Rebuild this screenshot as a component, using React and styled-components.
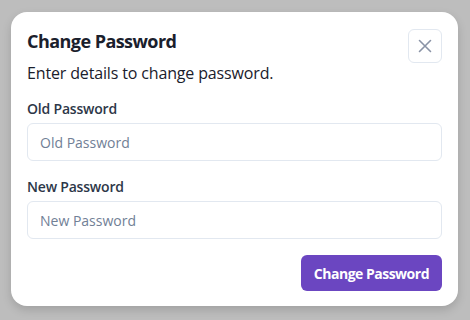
import React from "react";
import styled, { createGlobalStyle } from "styled-components";

const Global = createGlobalStyle`
  html, body { margin: 0; padding: 0; }
  body {
    background: #bdbdbd;
    font-family: "Open Sans", "Noto Sans", sans-serif;
    width: 470px;
    height: 320px;
    overflow: hidden;
  }
  * { box-sizing: border-box; }
`;

const Page = styled.div`
  padding: 12px 12px 0 11px;
`;

const Modal = styled.div`
  position: relative;
  background: #ffffff;
  border-radius: 16px;
  box-shadow: 0 4px 10px rgba(0, 0, 0, 0.15);
  width: 447px;
  padding: 16px 16px 15px 16px;
  display: flex;
  flex-direction: column;
`;

const Title = styled.h2`
  margin: 0;
  font-size: 18px;
  line-height: 27px;
  font-weight: 700;
  letter-spacing: -0.55px;
  color: #1a202c;
`;

const Description = styled.p`
  margin: 6px 0 0;
  font-size: 16px;
  line-height: 24px;
  letter-spacing: -0.15px;
  color: #1a202c;
`;

const CloseButton = styled.button`
  position: absolute;
  top: 17px;
  right: 16px;
  width: 34px;
  height: 34px;
  border: 1px solid #e2e8f0;
  border-radius: 6px;
  background: #fff;
  display: flex;
  align-items: center;
  justify-content: center;
  padding: 0;
  cursor: pointer;
`;

const Field = styled.div`
  display: flex;
  flex-direction: column;
  margin-top: ${(p) => p.$mt}px;
`;

const Label = styled.label`
  font-size: 14px;
  line-height: 21px;
  font-weight: 600;
  letter-spacing: -0.2px;
  color: #2d3748;
  margin-bottom: 4px;
`;

const Input = styled.input`
  height: 38px;
  width: 100%;
  border: 1px solid #e2e8f0;
  border-radius: 6px;
  padding: 0 12px;
  font-family: inherit;
  font-size: 14px;
  color: #1a202c;
  outline: none;
  &::placeholder { color: #718096; }
`;

const Footer = styled.div`
  display: flex;
  justify-content: flex-end;
  margin-top: 16px;
`;

const PrimaryButton = styled.button`
  height: 36px;
  padding: 0 13px;
  border: none;
  border-radius: 6px;
  background: #6b46c1;
  color: #fff;
  font-family: inherit;
  font-size: 14px;
  font-weight: 700;
  letter-spacing: -0.5px;
  cursor: pointer;
`;

export default function App() {
  return (
    <>
      <Global />
      <Page>
        <Modal>
          <Title>Change Password</Title>
          <CloseButton aria-label="Close">
            <svg width="16" height="16" viewBox="0 0 16 16" fill="none">
              <path d="M2.5 2.5 L13.5 13.5 M13.5 2.5 L2.5 13.5" stroke="#8a93a6" strokeWidth="1.6" strokeLinecap="round" />
            </svg>
          </CloseButton>
          <Description>Enter details to change password.</Description>
          <Field $mt={13}>
            <Label>Old Password</Label>
            <Input type="password" placeholder="Old Password" />
          </Field>
          <Field $mt={15}>
            <Label>New Password</Label>
            <Input type="password" placeholder="New Password" />
          </Field>
          <Footer>
            <PrimaryButton>Change Password</PrimaryButton>
          </Footer>
        </Modal>
      </Page>
    </>
  );
}
